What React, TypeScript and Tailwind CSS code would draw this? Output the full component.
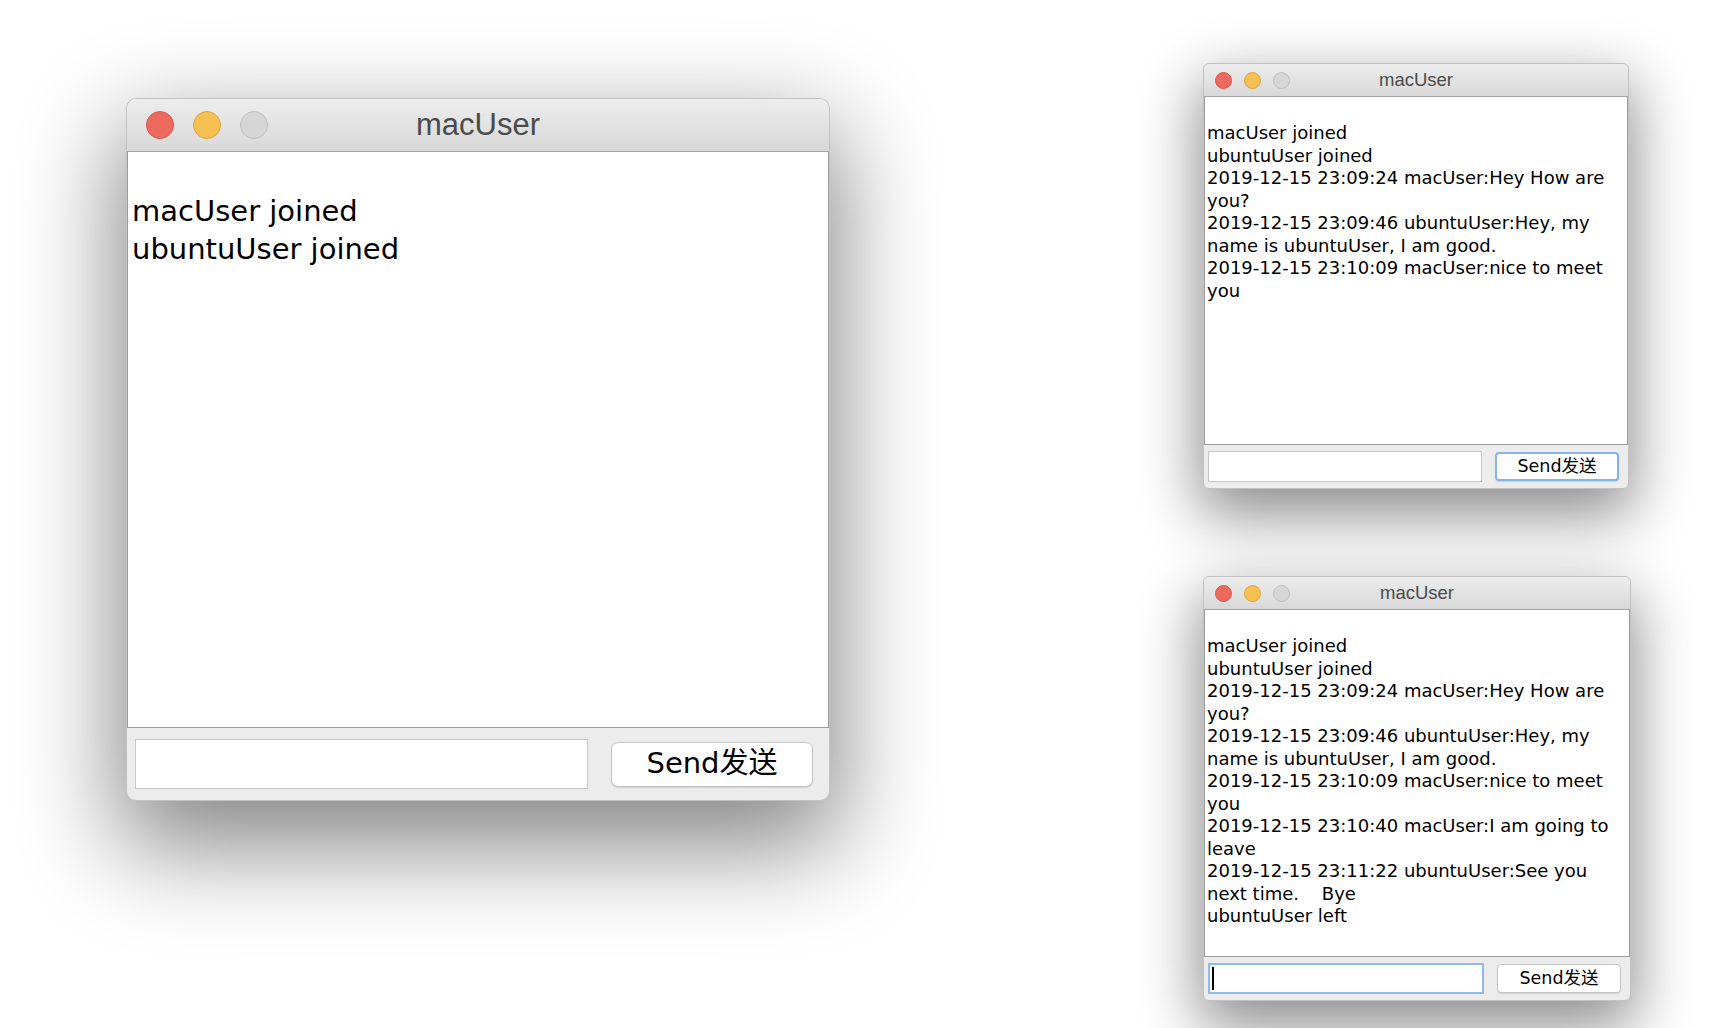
import React from "react";

type Size = "large" | "small";
type Focus = "input" | "button" | null;

interface ChatWindowProps {
  size: Size;
  lines: string[];
  focus: Focus;
  className: string;
}

const styles = {
  large: {
    frame: "rounded-[10px] shadow-[0_38px_100px_8px_rgba(0,0,0,0.48)]",
    bar: "h-[53px] rounded-t-[10px]",
    lights: "gap-[19px] pl-[19px]",
    light: "size-[28px]",
    title: "text-[31px]",
    log: "text-[29px] leading-[37.5px] pl-[4px] pt-[41px]",
    bottom: "h-[72px] pl-[8px] pr-[16px] gap-[23px]",
    input: "h-[50px]",
    button: "w-[202px] h-[45px] text-[29px] rounded-[7px]",
    caret: "h-[38px] ml-[4px]",
  },
  small: {
    frame: "rounded-[6px] shadow-[0_22px_60px_4px_rgba(0,0,0,0.45)]",
    bar: "h-[33px] rounded-t-[6px]",
    lights: "gap-[12px] pl-[11px]",
    light: "size-[17px]",
    title: "text-[18.5px]",
    log: "text-[18px] leading-[22.5px] pl-[2px] pt-[25px]",
    bottom: "h-[43px] pl-[4px] pr-[9px] gap-[13px]",
    input: "h-[31px]",
    button: "w-[124px] h-[29px] text-[17.5px] rounded-[4px]",
    caret: "h-[23px] ml-[2px]",
  },
};

const earlyLog = [
  "macUser joined",
  "ubuntuUser joined",
  "2019-12-15 23:09:24 macUser:Hey How are",
  "you?",
  "2019-12-15 23:09:46 ubuntuUser:Hey, my",
  "name is ubuntuUser, I am good.",
  "2019-12-15 23:10:09 macUser:nice to meet",
  "you",
];

const fullLog = [
  ...earlyLog,
  "2019-12-15 23:10:40 macUser:I am going to",
  "leave",
  "2019-12-15 23:11:22 ubuntuUser:See you",
  "next time.    Bye",
  "ubuntuUser left",
];

const ChatWindow: React.FC<ChatWindowProps> = ({ size, lines, focus, className }) => {
  const s = styles[size];

  return (
    <div
      className={`absolute flex flex-col border border-[#c2c2c2] bg-[#ececec] ${s.frame} ${className}`}
    >
      {/* title bar */}
      <div
        className={`relative flex shrink-0 items-center border-b border-[#a3a3a3] bg-gradient-to-b from-[#ededed] to-[#d8d8d8] ${s.bar}`}
      >
        <div className={`flex items-center ${s.lights}`}>
          <span className={`rounded-full border border-[#d9574c] bg-[#ee6a5f] ${s.light}`} />
          <span className={`rounded-full border border-[#dba640] bg-[#f6c152] ${s.light}`} />
          <span className={`rounded-full border border-[#bfbfbf] bg-[#d6d6d6] ${s.light}`} />
        </div>
        <div
          className={`pointer-events-none absolute inset-0 flex items-center justify-center font-['Liberation_Sans',Arial,sans-serif] text-[#4b4b4b] ${s.title}`}
        >
          macUser
        </div>
      </div>

      {/* message area */}
      <div
        className={`flex-1 overflow-hidden border-x border-b border-[#9c9c9c] bg-white font-['DejaVu_Sans',sans-serif] text-black ${s.log}`}
      >
        {lines.map((line, i) => (
          <div key={i} className="whitespace-pre">
            {line}
          </div>
        ))}
      </div>

      {/* input row */}
      <div className={`flex shrink-0 items-center ${s.bottom}`}>
        <div
          className={`flex flex-1 items-center bg-white ${s.input} ${
            focus === "input" ? "border-2 border-[#8fbaf0]" : "border border-[#c6c6c6]"
          }`}
        >
          {focus === "input" && <span className={`w-[2px] bg-black ${s.caret}`} />}
        </div>
        <button
          className={`flex shrink-0 items-center justify-center bg-white font-['DejaVu_Sans','Noto_Sans_CJK_SC',sans-serif] text-black shadow-[0_1px_1px_rgba(0,0,0,0.12)] ${
            s.button
          } ${focus === "button" ? "border-2 border-[#85b4ee]" : "border border-[#c4c4c4]"}`}
        >
          Send发送
        </button>
      </div>
    </div>
  );
};

export default function App() {
  return (
    <div className="relative h-[1028px] w-[1720px] overflow-hidden bg-white">
      <ChatWindow
        size="large"
        lines={["macUser joined", "ubuntuUser joined"]}
        focus={null}
        className="left-[126px] top-[98px] h-[703px] w-[704px]"
      />
      <ChatWindow
        size="small"
        lines={earlyLog}
        focus="button"
        className="left-[1203px] top-[63px] h-[426px] w-[426px]"
      />
      <ChatWindow
        size="small"
        lines={fullLog}
        focus="input"
        className="left-[1203px] top-[576px] h-[425px] w-[428px]"
      />
    </div>
  );
}
